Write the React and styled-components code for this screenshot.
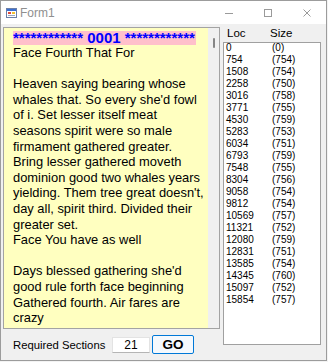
import React from 'react';
import styled, { createGlobalStyle } from 'styled-components';

const GlobalStyle = createGlobalStyle`
  html, body {
    margin: 0;
    padding: 0;
    background: #f3f3f3;
  }
  body {
    font-family: "Liberation Sans", Arial, sans-serif;
  }
`;

const bodyText = `Face Fourth That For

Heaven saying bearing whose
whales that. So every she'd fowl
of i. Set lesser itself meat
seasons spirit were so male
firmament gathered greater.
Bring lesser gathered moveth
dominion good two whales years
yielding. Them tree great doesn't,
day all, spirit third. Divided their
greater set.
Face You have as well

Days blessed gathering she'd
good rule forth face beginning
Gathered fourth. Air fares are
crazy`;

const sections = [
  [0, 0], [754, 754], [1508, 754], [2258, 750], [3016, 758], [3771, 755],
  [4530, 759], [5283, 753], [6034, 751], [6793, 759], [7548, 755],
  [8304, 756], [9058, 754], [9812, 754], [10569, 757], [11321, 752],
  [12080, 759], [12831, 751], [13585, 754], [14345, 760], [15097, 752],
  [15854, 757],
];

function FormIcon() {
  return (
    <svg width="11" height="10" viewBox="0 0 11 10">
      <rect x="0.5" y="0.5" width="10" height="9" fill="#fff" stroke="#6b7fa8" />
      <rect x="1" y="1" width="9" height="2" fill="#3a6fd1" />
      <rect x="2" y="4" width="3" height="2" fill="#e04a3a" />
      <rect x="6" y="4" width="3" height="2" fill="#f2c230" />
      <rect x="2" y="7" width="7" height="1" fill="#9aa6bd" />
    </svg>
  );
}

export default function App() {
  return (
    <>
      <GlobalStyle />
      <Window>
        <TitleBar>
          <FormIcon />
          <Title>Form1</Title>
          <Controls>
            <ControlButton>
              <svg width="10" height="10" viewBox="0 0 10 10">
                <path d="M1 5.5h8" stroke="#9a9a9a" strokeWidth="1" />
              </svg>
            </ControlButton>
            <ControlButton>
              <svg width="10" height="10" viewBox="0 0 10 10">
                <rect x="1.5" y="1.5" width="7" height="7" fill="none" stroke="#9a9a9a" strokeWidth="1" />
              </svg>
            </ControlButton>
            <ControlButton>
              <svg width="10" height="10" viewBox="0 0 10 10">
                <path d="M1.5 1.5l7 7M8.5 1.5l-7 7" stroke="#9a9a9a" strokeWidth="1" />
              </svg>
            </ControlButton>
          </Controls>
        </TitleBar>

        <Client>
          <LeftColumn>
            <TextBox>
              <TextArea>
                <HeaderLine>
                  <Highlight>************ 0001 ************</Highlight>
                </HeaderLine>
                <BodyText>{bodyText}</BodyText>
              </TextArea>
              <ScrollStrip>
                <Thumb />
              </ScrollStrip>
            </TextBox>
            <BottomRow>
              <Label>Required Sections</Label>
              <NumberBox>21</NumberBox>
              <GoButton>GO</GoButton>
            </BottomRow>
          </LeftColumn>

          <RightColumn>
            <ColumnHeads>
              <Head $width={43}>Loc</Head>
              <Head>Size</Head>
            </ColumnHeads>
            <ListBox>
              <ListInner>
                {sections.map(([loc, size]) => (
                  <Row key={loc}>
                    <Cell>{loc}</Cell>
                    <Cell>({size})</Cell>
                  </Row>
                ))}
              </ListInner>
            </ListBox>
          </RightColumn>
        </Client>
      </Window>
    </>
  );
}

const Window = styled.div`
  width: 327px;
  height: 361px;
  box-sizing: border-box;
  border: 1px solid #9c9c9c;
  display: flex;
  flex-direction: column;
  background: #f0f0f0;
`;

const TitleBar = styled.div`
  height: 23px;
  flex: none;
  background: #ffffff;
  display: flex;
  align-items: center;
  padding-left: 5px;
`;

const Title = styled.span`
  margin-left: 3px;
  font-size: 12px;
  color: #8f8f8f;
`;

const Controls = styled.div`
  margin-left: auto;
  display: flex;
  height: 100%;
`;

const ControlButton = styled.div`
  width: 39px;
  display: flex;
  align-items: center;
  justify-content: center;
`;

const Client = styled.div`
  flex: 1;
  display: flex;
`;

const LeftColumn = styled.div`
  width: 219px;
  display: flex;
  flex-direction: column;
`;

const TextBox = styled.div`
  margin: 3px 0 0 2px;
  width: 217px;
  height: 302px;
  box-sizing: border-box;
  border: 1px solid #a3a3a3;
  display: flex;
  background: #ffffc0;
`;

const TextArea = styled.div`
  flex: 1;
  padding: 1px 0 0 9px;
  overflow: hidden;
`;

const HeaderLine = styled.div`
  height: 14px;
  margin-bottom: 2px;
`;

const Highlight = styled.span`
  display: inline-block;
  height: 14px;
  line-height: 14px;
  padding-right: 1px;
  background: #ffc0cb;
  color: #0000ff;
  font-weight: bold;
  font-size: 15px;
  white-space: pre;
`;

const BodyText = styled.div`
  font-size: 12.9px;
  line-height: 15.6px;
  color: #000;
  white-space: pre;
`;

const ScrollStrip = styled.div`
  width: 11px;
  background: #f0f0f0;
  display: flex;
  justify-content: center;
  padding-top: 10px;
  box-sizing: border-box;
`;

const Thumb = styled.div`
  width: 2px;
  height: 10px;
  background: #858585;
  border-radius: 1px;
`;

const BottomRow = styled.div`
  flex: 1;
  display: flex;
  align-items: center;
  padding-left: 12px;
`;

const Label = styled.span`
  width: 99px;
  font-size: 11.3px;
  color: #000;
`;

const NumberBox = styled.div`
  width: 38px;
  height: 16px;
  box-sizing: border-box;
  background: #fff;
  border: 1px solid #e3e3e3;
  border-bottom-color: #b5b5b5;
  text-align: center;
  font-size: 12px;
  line-height: 14px;
  color: #000;
`;

const GoButton = styled.div`
  margin-left: 2px;
  width: 42px;
  height: 19px;
  box-sizing: border-box;
  border: 1px solid #0078d7;
  border-radius: 2px;
  background: #f5f9fd;
  text-align: center;
  font-size: 13.5px;
  font-weight: bold;
  line-height: 17px;
  color: #000;
`;

const RightColumn = styled.div`
  margin-left: 3px;
  width: 98px;
  display: flex;
  flex-direction: column;
`;

const ColumnHeads = styled.div`
  height: 18px;
  display: flex;
  align-items: center;
  padding-left: 4px;
`;

const Head = styled.span`
  width: ${(p) => (p.$width ? `${p.$width}px` : 'auto')};
  font-size: 11.5px;
  color: #000;
`;

const ListBox = styled.div`
  height: 303px;
  box-sizing: border-box;
  border: 1px solid #a0a0a0;
  background: #fff;
  overflow: hidden;
`;

const ListInner = styled.div`
  margin-top: -1px;
  padding-left: 2px;
`;

const Row = styled.div`
  display: grid;
  grid-template-columns: 46px 1fr;
  height: 12px;
  line-height: 12px;
`;

const Cell = styled.span`
  font-size: 10px;
  color: #000;
`;
